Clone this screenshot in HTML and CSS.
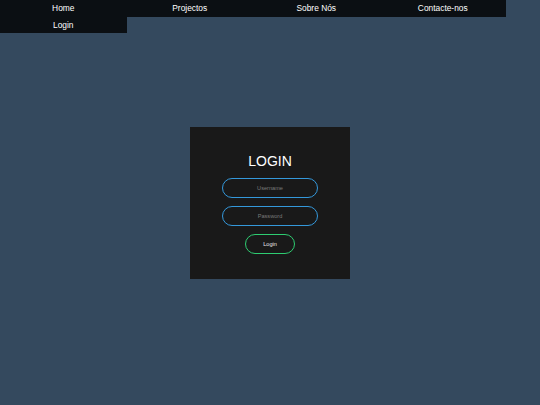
FILE: index.html
```html
<!DOCTYPE html>
<html lang="pt">
<head>
<meta charset="utf-8">
<title>Login</title>
<link rel="stylesheet" href="styles.css">
</head>
<body>
<nav class="menu">
  <a class="menu-item" href="#">Home</a>
  <a class="menu-item" href="#">Projectos</a>
  <a class="menu-item" href="#">Sobre Nós</a>
  <a class="menu-item" href="#">Contacte-nos</a>
  <a class="menu-item" href="#">Login</a>
</nav>
<main class="stage">
  <form class="box">
    <h1 class="box-title">LOGIN</h1>
    <input class="field" type="text" placeholder="Username">
    <input class="field" type="password" placeholder="Password">
    <button class="submit" type="button">Login</button>
  </form>
</main>
</body>
</html>
```

FILE: styles.css
```css
html, body {
  margin: 0;
  padding: 0;
  height: 100%;
}
body {
  background: #34495e;
  font-family: "Liberation Sans", Arial, sans-serif;
  position: relative;
}
.menu {
  display: flex;
  flex-wrap: wrap;
  width: 506px;
  position: relative;
  z-index: 1;
}
.menu-item {
  width: 25%;
  height: 16.5px;
  display: flex;
  align-items: center;
  justify-content: center;
  background: #0b0f13;
  color: #ffffff;
  font-size: 8.4px;
  text-decoration: none;
}
.stage {
  position: absolute;
  inset: 0;
  display: flex;
  align-items: center;
  justify-content: center;
}
.box {
  width: 160px;
  box-sizing: border-box;
  background: #191919;
  padding: 26px 0 25px;
  display: flex;
  flex-direction: column;
  align-items: center;
}
.box-title {
  margin: 0 0 9px;
  height: 16px;
  line-height: 16px;
  font-size: 14px;
  font-weight: 400;
  color: #ffffff;
}
.field {
  width: 96px;
  height: 20px;
  box-sizing: border-box;
  margin: 0 0 8px;
  padding: 0;
  background: transparent;
  border: 1.5px solid #3498db;
  border-radius: 12px;
  text-align: center;
  font-family: "Liberation Sans", Arial, sans-serif;
  font-size: 5.6px;
  color: #ffffff;
  outline: none;
}
.field::placeholder {
  color: #7a7a7a;
}
.submit {
  width: 50px;
  height: 20px;
  box-sizing: border-box;
  padding: 0;
  background: transparent;
  border: 1.5px solid #2ecc71;
  border-radius: 12px;
  color: #e8e8e8;
  font-family: "Liberation Sans", Arial, sans-serif;
  font-size: 5.6px;
  font-weight: 400;
}
```
